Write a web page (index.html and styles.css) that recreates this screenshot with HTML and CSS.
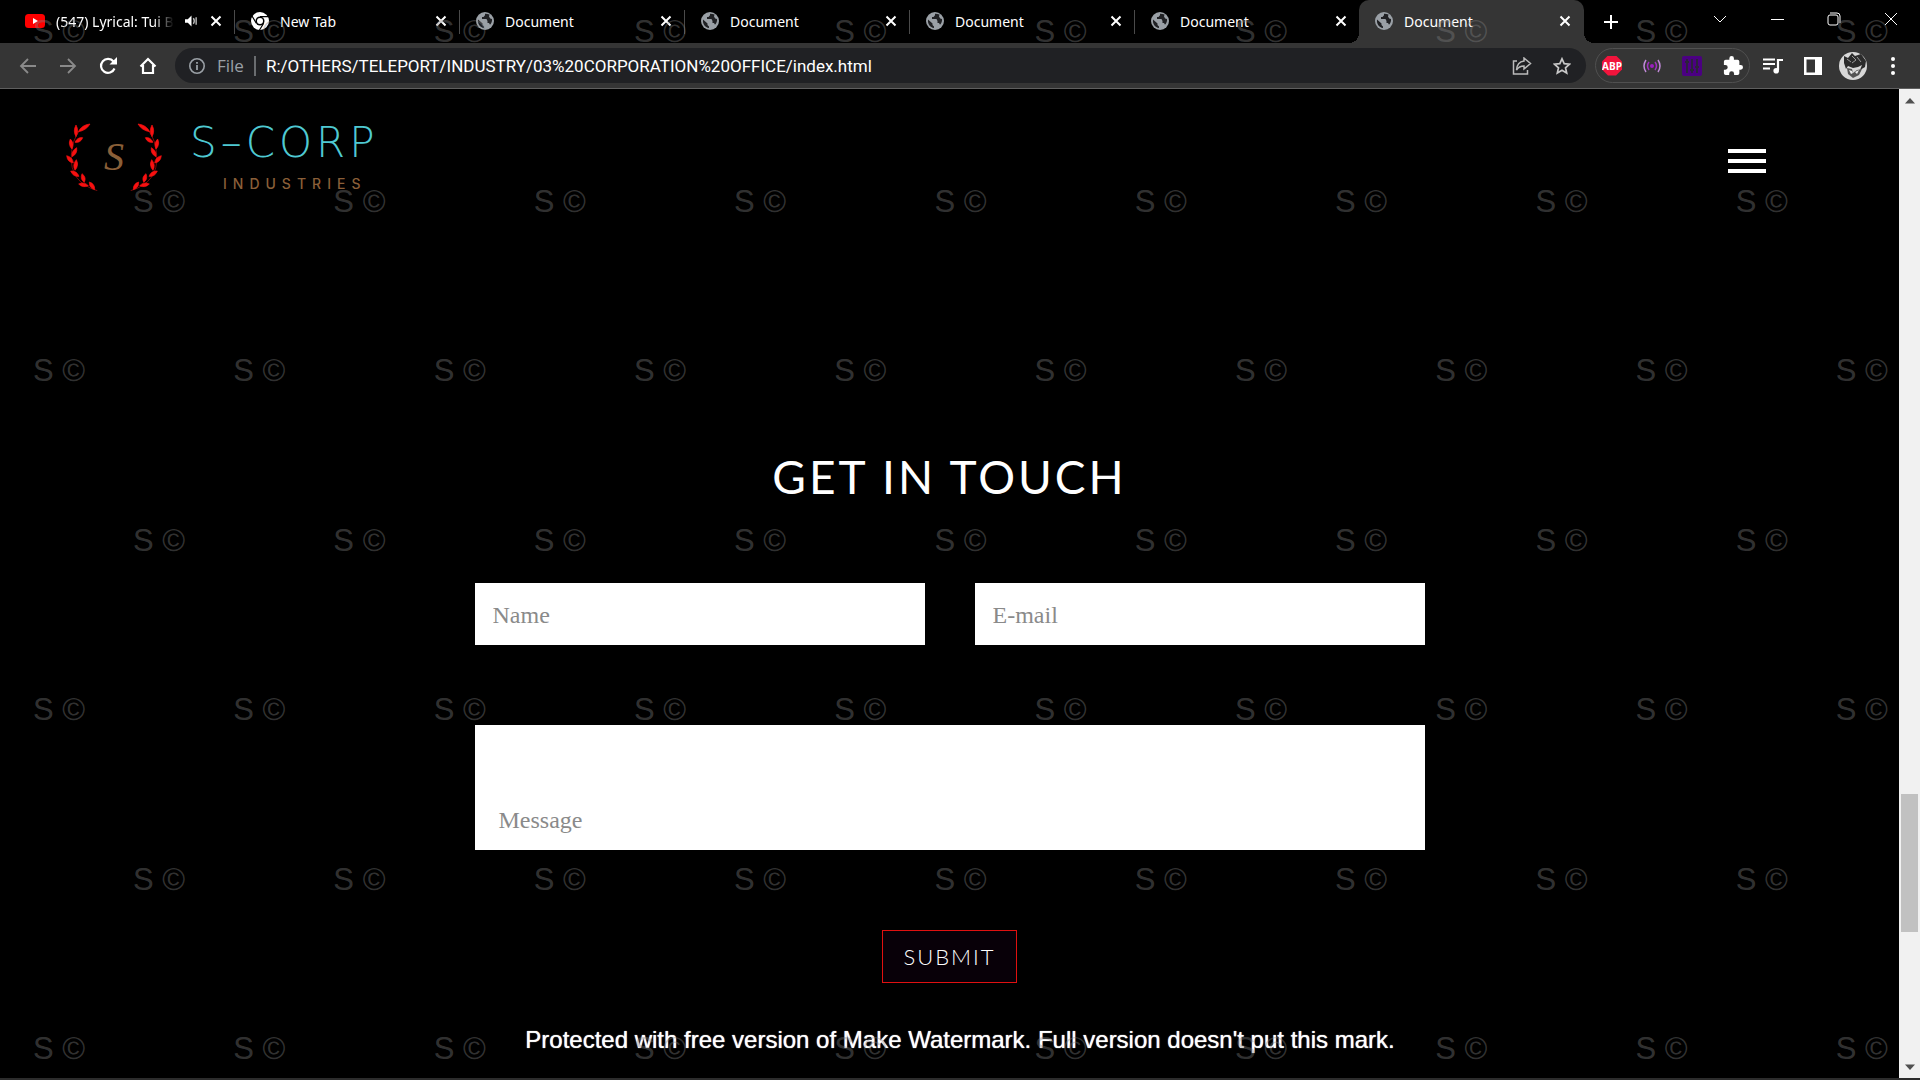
FILE: index.html
```html
<!DOCTYPE html>
<html lang="en">
<head>
<meta charset="utf-8">
<title>Document</title>
<link rel="stylesheet" href="styles.css">
</head>
<body>
<svg class="defs" aria-hidden="true">
  <symbol id="close" viewBox="0 0 12 12"><path d="M1.5 1.5l9 9M10.5 1.5l-9 9" stroke="#fff" stroke-width="2"/></symbol>
  <symbol id="globe" viewBox="0 0 18 18"><circle cx="9" cy="9" r="9" fill="#9aa0a6"/><path d="M2 7.500l4.500 4v1.500l1.500 1.500v1.500C4 15.500 1.500 12 2 7.500zM9 1.800v1.500L7.500 5H6v2h4.500l1 2v2h1.500l1 1.700c1.600-1.500 2.300-3.600 2-5.700l-1.800-.5-1.200-2 .5-2C12 2 10.500 1.700 9 1.800z" fill="#202124"/></symbol>
</svg>

<header class="browser">
  <nav class="tabs" aria-label="Tabs">
    <div class="tab">
      <svg class="fav yt" viewBox="0 0 20 14"><rect width="20" height="14" rx="3.500" fill="#f00"/><path d="M8 4l5 3-5 3z" fill="#fff"/></svg>
      <span class="title fade">(547) Lyrical: Tui B</span>
      <svg class="sound" viewBox="0 0 14 12"><path d="M0 4h3l4-4v12L3 8H0z" fill="#fff"/><path d="M9 3q2 3 0 6M12 2v8" stroke="#bbb" fill="none" stroke-width="1.500"/></svg>
      <button class="x" aria-label="Close tab"><svg><use href="#close"/></svg></button>
    </div>
    <div class="tab">
      <svg class="fav" viewBox="0 0 18 18"><circle cx="9" cy="9" r="9" fill="#fff"/><circle cx="9" cy="9" r="4.500" fill="#000"/><circle cx="9" cy="9" r="3" fill="#fff"/><path d="M9 4.700h8.500M5.300 11.200L1 4M12.700 11.200L8.500 18" stroke="#000" stroke-width="1.200"/></svg>
      <span class="title">New Tab</span>
      <button class="x" aria-label="Close tab"><svg><use href="#close"/></svg></button>
    </div>
    <div class="tab"><svg class="fav"><use href="#globe"/></svg><span class="title">Document</span><button class="x" aria-label="Close tab"><svg><use href="#close"/></svg></button></div>
    <div class="tab"><svg class="fav"><use href="#globe"/></svg><span class="title">Document</span><button class="x" aria-label="Close tab"><svg><use href="#close"/></svg></button></div>
    <div class="tab"><svg class="fav"><use href="#globe"/></svg><span class="title">Document</span><button class="x" aria-label="Close tab"><svg><use href="#close"/></svg></button></div>
    <div class="tab last"><svg class="fav"><use href="#globe"/></svg><span class="title">Document</span><button class="x" aria-label="Close tab"><svg><use href="#close"/></svg></button></div>
    <div class="tab active"><svg class="fav"><use href="#globe"/></svg><span class="title">Document</span><button class="x" aria-label="Close tab"><svg><use href="#close"/></svg></button></div>
    <button class="plus" aria-label="New tab"><svg width="16" height="16" viewBox="0 0 16 16"><path d="M8 1v14M1 8h14" stroke="#fff" stroke-width="2"/></svg></button>
    <div class="window">
      <button aria-label="Search tabs"><svg width="14" height="14" viewBox="0 0 14 14"><path d="M1 4l6 6 6-6" stroke="#fff" fill="none"/></svg></button>
      <button aria-label="Minimize"><svg width="14" height="14" viewBox="0 0 14 14"><path d="M1 7.500h13" stroke="#fff"/></svg></button>
      <button aria-label="Restore"><svg width="14" height="14" viewBox="0 0 14 14"><rect x="1" y="3" width="10" height="10" rx="2" stroke="#fff" fill="none"/><path d="M3 1h7q3 0 3 3v7" stroke="#fff" fill="none"/></svg></button>
      <button aria-label="Close"><svg width="14" height="14" viewBox="0 0 14 14"><path d="M1 1l12 12M13 1L1 13" stroke="#fff"/></svg></button>
    </div>
  </nav>

  <div class="toolbar">
    <div class="nav">
      <button aria-label="Back"><svg width="18" height="18" viewBox="0 0 18 18"><path d="M17 9H2M9 2L2 9l7 7" stroke="#8a8a8a" stroke-width="1.800" fill="none"/></svg></button>
      <button aria-label="Forward"><svg width="18" height="18" viewBox="0 0 18 18"><path d="M1 9h15M9 2l7 7-7 7" stroke="#8a8a8a" stroke-width="1.800" fill="none"/></svg></button>
      <button aria-label="Reload"><svg width="18" height="18" viewBox="0 0 18 18"><path d="M15.500 11.500A7 7 0 1 1 14.500 4.500" stroke="#fff" stroke-width="2.200" fill="none"/><path d="M18 0v7.500h-7.500z" fill="#fff"/></svg></button>
      <button aria-label="Home"><svg width="18" height="18" viewBox="0 0 18 18"><path d="M4 8v8h10V8M1.500 9.500L9 2l7.500 7.500" stroke="#fff" stroke-width="2.200" fill="none"/></svg></button>
    </div>
    <div class="omnibox">
      <svg width="18" height="18" viewBox="0 0 18 18"><circle cx="9" cy="9" r="7.200" stroke="#9aa0a6" stroke-width="1.600" fill="none"/><path d="M9 8v5M9 5v1.700" stroke="#9aa0a6" stroke-width="1.800"/></svg>
      <span class="scheme">File</span>
      <input class="url" aria-label="Address" value="R:/OTHERS/TELEPORT/INDUSTRY/03%20CORPORATION%20OFFICE/index.html">
      <button aria-label="Share"><svg width="20" height="18" viewBox="0 0 20 18"><path d="M5 4H1.500v13h14v-4" stroke="#bbb" stroke-width="1.500" fill="none"/><path d="M12 1l6.500 5.500L12 12V9Q7 9 4.500 13 5 5 12 4z" stroke="#bbb" stroke-width="1.500" fill="none"/></svg></button>
      <button aria-label="Bookmark"><svg width="18" height="18" viewBox="0 0 18 18"><path d="M9 1.800l2.200 4.900 5.300.5-4 3.600 1.200 5.300L9 13.300l-4.700 2.800 1.200-5.300-4-3.600 5.300-.5z" stroke="#c8c8c8" stroke-width="1.700" fill="none"/></svg></button>
    </div>
    <div class="extensions">
      <button class="abp" aria-label="ABP">ABP</button>
      <button aria-label="Signal"><svg width="18" height="14" viewBox="0 0 18 14"><circle cx="9" cy="7" r="2" fill="#9b1fc0"/><path d="M6 3q-3 4 0 8M12 3q3 4 0 8" stroke="#a030c0" stroke-width="1.500" fill="none"/><path d="M3 1q-4 6 0 12M15 1q4 6 0 12" stroke="#c08ad8" stroke-width="1.500" fill="none"/></svg></button>
      <button aria-label="Equalizer"><svg width="20" height="20" viewBox="0 0 20 20"><rect width="20" height="20" rx="2" fill="#4b0082"/><path d="M5 3v14M10 3v14M15 3v14M3 6h4M8 14h4M13 11h4" stroke="#2b2438" stroke-width="1.800"/></svg></button>
      <button aria-label="Extensions"><svg width="20" height="20" viewBox="1 1 22 22"><path d="M20.500 11H19V7a2 2 0 0 0-2-2h-4V3.500a2.500 2.500 0 0 0-5 0V5H4a2 2 0 0 0-2 2v3.800h1.500a2.700 2.700 0 0 1 0 5.400H2V20a2 2 0 0 0 2 2h3.800v-1.500a2.700 2.700 0 0 1 5.400 0V22H17a2 2 0 0 0 2-2v-4h1.500a2.500 2.500 0 0 0 0-5z" fill="#fff"/></svg></button>
    </div>
    <div class="tools">
      <button aria-label="Media"><svg width="20" height="16" viewBox="0 0 20 16"><path d="M0 1.500h12M0 6h12M0 10.500h7" stroke="#fff" stroke-width="1.800"/><path d="M15 12V2h5" stroke="#fff" stroke-width="2.200" fill="none"/><circle cx="13.200" cy="12.700" r="2.800" fill="#fff"/></svg></button>
      <button aria-label="Side panel"><svg width="18" height="18" viewBox="0 0 18 18"><path d="M0 0h18v18H0zM2.500 2.500v13H11v-13z" fill="#fff" fill-rule="evenodd"/></svg></button>
      <button aria-label="Profile"><svg width="28" height="28" viewBox="0 0 28 28"><circle cx="14" cy="14" r="14" fill="#d8d8d8"/><path d="M5 4l4 2 4-5 3 3 6-2 5 7-1 6-5 3 2-5-4 2-5 1-5-2-2 3-2-6z" fill="#2b2b2b"/><path d="M13 4l4 4-4 3M18 5l4 5M8 7l4 3" stroke="#999" fill="none"/><path d="M8 16l5 1 1 4 4-3 5-1-3 6-6 3-5-4z" fill="#555"/><path d="M10 18l3 1 1 2-2 1zM16 20l4-2-2 4z" fill="#eee"/></svg></button>
      <button aria-label="Menu"><svg width="4" height="18" viewBox="0 0 4 18"><circle cx="2" cy="2" r="2" fill="#fff"/><circle cx="2" cy="9" r="2" fill="#fff"/><circle cx="2" cy="16" r="2" fill="#fff"/></svg></button>
    </div>
  </div>
</header>

<div class="viewport">
  <main class="page">
    <header class="site-header">
      <a class="logo" href="#" aria-label="S-Corp Industries">
        <span class="emblem">
          <svg width="32" height="68" viewBox="48 54 96 204"><g id="branch" fill="#f81010"><path d="M142 257Q58 232 64 150Q66 105 90 75" fill="none" stroke="#b01010" stroke-width="2"/><path d="M85 80Q108 77 120 57Q96 59 85 80M78 95Q88 78 78 60Q68 78 78 95M75 112Q92 114 98 98Q82 96 75 112M66 132Q74 115 61 102Q53 119 66 132M66 155Q83 147 80 128Q64 137 66 155M70 174Q68 156 50 152Q52 171 70 174M75 196Q88 181 79 164Q66 179 75 196M87 214Q81 197 62 198Q69 216 87 214M103 232Q110 216 96 206Q89 222 103 232M115 242Q102 229 86 237Q98 250 115 242M134 254Q135 236 118 231Q117 249 134 254" stroke="#f81010" stroke-width="2"/></g></svg>
          <span class="monogram">S</span>
          <svg class="mirror" width="32" height="68" viewBox="48 54 96 204"><use href="#branch"/></svg>
        </span>
        <span class="wordmark"><span class="name">S–CORP</span><span class="sub">INDUSTRIES</span></span>
      </a>
      <button class="burger" aria-label="Open menu"><span></span><span></span><span></span></button>
    </header>

    <form class="contact">
      <h1>GET IN TOUCH</h1>
      <div class="fields">
        <input type="text" placeholder="Name" aria-label="Name">
        <input type="email" placeholder="E-mail" aria-label="E-mail">
        <textarea placeholder="Message" aria-label="Message"></textarea>
      </div>
      <button class="submit" type="button">SUBMIT</button>
    </form>
  </main>
  <div class="scrollbar" aria-hidden="true">
    <svg width="10" height="6" viewBox="0 0 10 6"><path d="M0 5.500L5 0l5 5.500z" fill="#505050"/></svg>
    <div class="track"><div class="thumb"></div></div>
    <svg width="10" height="6" viewBox="0 0 10 6"><path d="M0 .5L5 6l5-5.500z" fill="#505050"/></svg>
  </div>
</div>

<p class="notice">Protected with free version of Make Watermark. Full version doesn't put this mark.</p>
<div class="watermark" aria-hidden="true">
  <div class="marks"><span>S ©</span><span>S ©</span><span>S ©</span><span>S ©</span><span>S ©</span><span>S ©</span><span>S ©</span><span>S ©</span><span>S ©</span><span>S ©</span></div>
  <div class="marks odd"><span>S ©</span><span>S ©</span><span>S ©</span><span>S ©</span><span>S ©</span><span>S ©</span><span>S ©</span><span>S ©</span><span>S ©</span></div>
  <div class="marks"><span>S ©</span><span>S ©</span><span>S ©</span><span>S ©</span><span>S ©</span><span>S ©</span><span>S ©</span><span>S ©</span><span>S ©</span><span>S ©</span></div>
  <div class="marks odd"><span>S ©</span><span>S ©</span><span>S ©</span><span>S ©</span><span>S ©</span><span>S ©</span><span>S ©</span><span>S ©</span><span>S ©</span></div>
  <div class="marks"><span>S ©</span><span>S ©</span><span>S ©</span><span>S ©</span><span>S ©</span><span>S ©</span><span>S ©</span><span>S ©</span><span>S ©</span><span>S ©</span></div>
  <div class="marks odd"><span>S ©</span><span>S ©</span><span>S ©</span><span>S ©</span><span>S ©</span><span>S ©</span><span>S ©</span><span>S ©</span><span>S ©</span></div>
  <div class="marks"><span>S ©</span><span>S ©</span><span>S ©</span><span>S ©</span><span>S ©</span><span>S ©</span><span>S ©</span><span>S ©</span><span>S ©</span><span>S ©</span></div>
</div>
</body>
</html>
```
FILE: styles.css
```css
* { box-sizing: border-box; }
body {
  margin: 0;
  min-height: 100vh;
  display: flex;
  flex-direction: column;
  position: relative;
  background: #000;
  color: #fff;
  font-family: "Noto Sans", "Open Sans", sans-serif;
}
button, input, textarea { font: inherit; color: inherit; border: 0; background: none; padding: 0; margin: 0; border-radius: 0; outline: 0; }
button { display: flex; align-items: center; justify-content: center; }
svg { display: block; flex: none; }
.defs { position: absolute; width: 0; height: 0; }

/* Tab strip */
.tabs { display: flex; height: 43px; padding-left: 10px; background: #000; }
.tab { position: relative; flex: 0 1 225px; min-width: 0; display: flex; align-items: center; gap: 11px; padding: 0 12px 1px 16px; font-size: 14px; }
.tab:first-child { padding-left: 15px; }
.tab::after { content: ""; position: absolute; right: 0; top: 10px; width: 1px; height: 24px; background: #4a4a4a; }
.tab.last::after { display: none; }
.fav { width: 18px; height: 18px; }
.fav.yt { width: 20px; height: 14px; }
.title { flex: 1; min-width: 0; overflow: hidden; white-space: nowrap; }
.fade { -webkit-mask-image: linear-gradient(90deg, #000 82%, transparent); mask-image: linear-gradient(90deg, #000 82%, transparent); }
.sound { width: 13px; height: 12px; }
.x { width: 14px; height: 14px; }
.x svg { width: 12px; height: 12px; }
.tab.active { margin-left: -1px; background: #353535; border-radius: 10px 10px 0 0; }
.tab.active::before, .tab.active::after { content: ""; position: absolute; top: auto; bottom: 0; width: 10px; height: 10px; }
.tab.active::before { left: -10px; background: radial-gradient(circle at 0 0, transparent 10px, #353535 10px); }
.tab.active::after { right: -10px; background: radial-gradient(circle at 100% 0, transparent 10px, #353535 10px); }
.plus { width: 54px; }
.window { display: flex; margin: 0 1px 0 auto; height: 37px; }
.window button { width: 57px; }

/* Toolbar */
.toolbar { display: flex; align-items: center; height: 46px; padding: 0 7px 0 8px; background: #353535; border-bottom: 1px solid #5f5f5f; }
.nav, .tools { display: flex; }
.nav button, .tools button { width: 40px; height: 35px; }
.omnibox { flex: 1; display: flex; align-items: center; height: 35px; margin-left: 7px; padding: 0 4px 0 13px; border-radius: 18px; background: #202124; font: 17px "Open Sans", sans-serif; }
.omnibox button { width: 40px; }
.scheme { margin-left: 11px; padding-right: 10px; color: #9aa0a6; line-height: 20px; border-right: 2px solid #6a6d70; }
.url { flex: 1; min-width: 0; margin-left: 10px; font: 17px Roboto, sans-serif; }
.extensions { display: flex; align-items: center; justify-content: space-between; width: 155px; height: 35px; margin: 0 3px 0 9px; padding: 0 6px; border: 1px solid #505050; border-radius: 18px; }
.abp { width: 20px; height: 20px; background: #f2143c; font: 700 10px "Open Sans", sans-serif; clip-path: polygon(30% 0, 70% 0, 100% 30%, 100% 70%, 70% 100%, 30% 100%, 0 70%, 0 30%); }

/* Page */
.viewport { flex: 1; display: flex; border-bottom: 2px solid #2c2c2c; }
.page { flex: 1; min-width: 0; }
.site-header { display: flex; justify-content: space-between; align-items: flex-start; padding: 34px 133px 0 66px; }
.logo { display: flex; gap: 28px; color: inherit; text-decoration: none; }
.emblem { display: flex; justify-content: space-between; align-items: center; width: 96px; height: 68px; }
.mirror { transform: scaleX(-1); }
.monogram { color: #8a5f38; font: italic 40px/60px "Liberation Serif", serif; }
.wordmark { display: flex; flex-direction: column; gap: 16px; padding-top: 3px; }
.name { color: #4fc9d2; font: 200 42px/34px "DejaVu Sans", sans-serif; letter-spacing: 4px; }
.sub { padding-left: 33px; color: #8a5f38; font: 500 14px/16px Inter, sans-serif; letter-spacing: 6px; }
.burger { flex-direction: column; gap: 6px; width: 38px; margin-top: 26px; }
.burger span { width: 38px; height: 4px; background: #fff; }
.contact { display: flex; flex-direction: column; align-items: center; padding: 253px 24px 0; }
h1 { margin: 0; font: 400 46px/64px Lato, sans-serif; letter-spacing: 3px; }
.fields { display: grid; grid-template-columns: 1fr 1fr; gap: 80px 50px; width: 100%; max-width: 950px; margin: 74px 0 80px; }
.fields input, .fields textarea { width: 100%; height: 62px; padding: 2px 18px 0; background: #fff; color: #222; font: 24px/26px "Liberation Serif", serif; }
.fields textarea { grid-column: 1 / -1; height: 125px; padding: 82px 24px 16px; resize: none; overflow: hidden; }
::placeholder { color: #8a8a8a; opacity: 1; }
.submit { padding: 0 20px; height: 53px; border: 1px solid #e01010; background: #080008; font: 300 22px/50px Lato, sans-serif; letter-spacing: 2px; }

/* Scrollbar */
.scrollbar { display: flex; flex-direction: column; align-items: center; justify-content: space-between; width: 21px; padding: 9px 0 8px; background: #f1f1f1; }
.track { flex: 1; display: flex; flex-direction: column; justify-content: flex-end; padding-bottom: 132px; }
.thumb { width: 17px; height: 138px; background: #c1c1c1; }

/* Overlays */
.notice { position: absolute; left: 0; right: 0; bottom: 26px; margin: 0; text-align: center; font: 24px/28px "Liberation Sans", sans-serif; text-shadow: 0 0 1px #fff; }
.watermark { position: absolute; inset: 14px 0 13px; display: flex; flex-direction: column; justify-content: space-between; pointer-events: none; color: rgba(128, 128, 128, .4); font: 31px/36px "Liberation Sans", sans-serif; }
.marks { display: flex; justify-content: space-between; padding: 0 32px 0 33px; }
.marks.odd { padding: 0 132px 0 133px; }
```
